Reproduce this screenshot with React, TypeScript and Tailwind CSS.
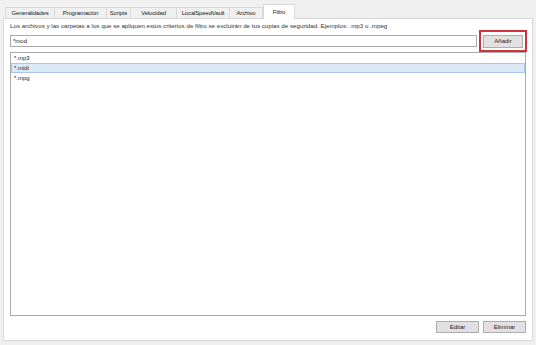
import React from 'react';

const tabs = [
  { label: 'Generalidades', w: 'w-[50px]' },
  { label: 'Programación', w: 'w-[53px]' },
  { label: 'Scripts', w: 'w-[25px]' },
  { label: 'Velocidad', w: 'w-[47px]' },
  { label: 'LocalSpeedVault', w: 'w-[54px]' },
  { label: 'Archivo', w: 'w-[34px]' },
];

const items = ['*.mp3', '*.midi', '*.mpg'];

export default function App() {
  return (
    <div className="w-[536px] h-[345px] bg-[#f0f0f0] text-[6px] text-[#222] overflow-hidden" style={{ fontFamily: '"Liberation Sans", Arial, sans-serif' }}>
      {/* Tabs */}
      <div className="flex items-end pl-[5px] pt-[4px] h-[18px] tracking-[-0.15px]">
        {tabs.map((t) => (
          <div key={t.label} className={`${t.w} h-[11px] flex items-center justify-center border border-[#d9d9d9] border-b-0 bg-[#f0f0f0] -mr-px whitespace-nowrap`}>
            {t.label}
          </div>
        ))}
        <div className="w-[32px] h-[15px] ml-[1px] flex items-center justify-center border border-[#d9d9d9] border-b-0 bg-white relative top-px z-10">
          Filtro
        </div>
      </div>

      {/* Panel */}
      <div className="ml-[3px] mr-[3px] h-[323px] bg-white border border-[#d9d9d9] flex flex-col px-[6px] pt-[3px]">
        <div className="text-[#333] text-[6.2px] h-[8px] flex items-center whitespace-nowrap">
          Los archivos y las carpetas a los que se apliquen estos criterios de filtro se excluirán de tus copias de seguridad. Ejemplos: .mp3 o .mpeg
        </div>
        <div className="flex items-center h-[22px] -mr-[1px]">
          <div className="flex-1 h-[12px] border border-[#ababab] flex items-center px-[2px]">*mod</div>
          <div className="ml-[2px] w-[48px] h-[22px] border-[2px] border-[#d2323c] flex items-center justify-center">
            <div className="w-[40px] h-[13px] bg-[#e1e1e1] border border-[#adadad] flex items-center justify-center">Añadir</div>
          </div>
        </div>
        <div className="h-[264px] border border-[#ababab]">
          {items.map((it, i) => (
            <div
              key={it}
              className={
                i === 1
                  ? 'h-[10px] px-[2px] flex items-center bg-[#dde8f6] border border-[#a9c7ee]'
                  : 'h-[10px] px-[2px] flex items-center border border-transparent'
              }
            >
              {it}
            </div>
          ))}
        </div>
        <div className="flex justify-end gap-[4px] mt-[5px]">
          <div className="w-[43px] h-[12px] bg-[#e1e1e1] border border-[#adadad] flex items-center justify-center">Editar</div>
          <div className="w-[43px] h-[12px] bg-[#e1e1e1] border border-[#adadad] flex items-center justify-center">Eliminar</div>
        </div>
      </div>
    </div>
  );
}
